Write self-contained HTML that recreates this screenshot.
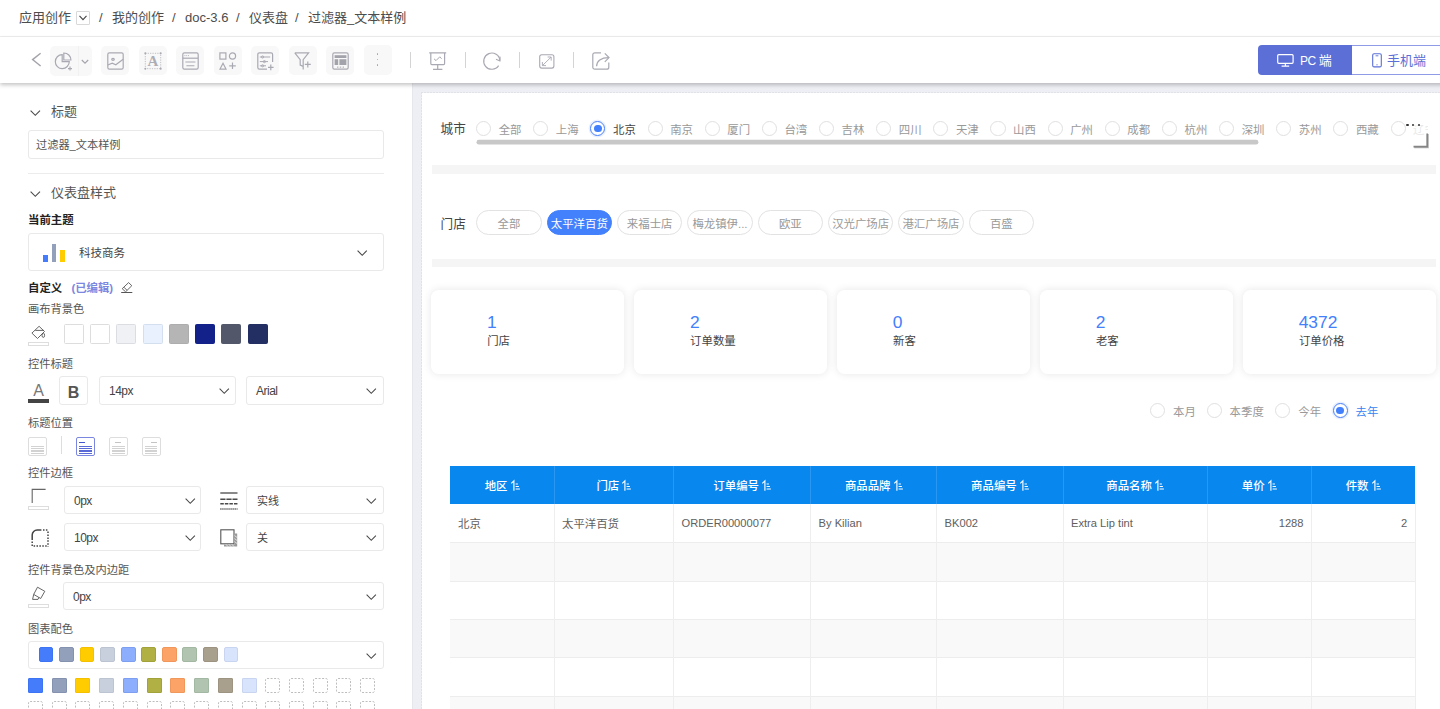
<!DOCTYPE html>
<html lang="zh-CN">
<head>
<meta charset="utf-8">
<title>过滤器_文本样例</title>
<style>
*{box-sizing:border-box;margin:0;padding:0}
html,body{width:1440px;height:709px;overflow:hidden;background:#fff}
body{font-family:"Liberation Sans","Noto Sans CJK SC",sans-serif;font-size:11px;color:#555;position:relative}
.abs{position:absolute}
svg{display:block;overflow:visible}
/* breadcrumb */
#crumb{position:absolute;left:0;top:0;width:1440px;height:37px;background:#fff;border-bottom:1px solid #efefef}
#crumb .t{position:absolute;top:8px;height:20px;line-height:20px;font-size:13px;color:#4c4c4c;white-space:nowrap}
/* toolbar */
#tool{position:absolute;left:0;top:37px;width:1440px;height:46px;background:#fff;z-index:5}
#toolsh{position:absolute;left:0;top:37px;width:1480px;height:46px;background:#fff;box-shadow:0 2px 4px rgba(0,0,0,.23);z-index:4}
.tb{position:absolute;top:9px;width:28px;height:29px;background:#f8f8f8;border-radius:5px}
.sep{position:absolute;top:15px;width:1px;height:16px;background:#d4d4d4}
/* left */
#left{position:absolute;left:0;top:83px;width:413px;height:626px;background:#fff;border-right:1px solid #e6e7ec}
#gap{position:absolute;left:412px;top:83px;width:1028px;height:626px;background:#eeeff5}
#canvas{position:absolute;left:421px;top:92px;width:1019px;height:617px;background:#fff;overflow:hidden}
.lab{position:absolute;left:28px;height:16px;line-height:16px;font-size:11.25px;color:#555;white-space:nowrap}
.sec{position:absolute;left:51px;height:18px;line-height:18px;font-size:13px;color:#555;white-space:nowrap}
.box{position:absolute;background:#fff;border:1px solid #e9e9e9;border-radius:3px}
.box .v{position:absolute;left:10px;top:0;height:100%;display:flex;align-items:center;font-size:11px;color:#444;white-space:nowrap}
.chev{position:absolute;width:10px;height:6px}
.sw{position:absolute;border-radius:1.5px}
/*CCSS-S*/
.flab{position:absolute;height:20px;line-height:20px;font-size:12.6px;color:#444;white-space:nowrap}
.rd{position:absolute;width:15.1px;height:15.1px;border:1px solid #e0e0e0;border-radius:50%;background:#fff}
.rd.on{border-color:#4a7ff7;box-shadow:0 0 0 1.5px rgba(64,128,255,.12)}
.rd.on:after{content:"";position:absolute;left:2.8px;top:2.8px;width:7.5px;height:7.5px;border-radius:50%;background:#4380fc}
.rt{position:absolute;height:18px;line-height:18px;font-size:11.4px;white-space:nowrap}
.pill{position:absolute;width:65.4px;height:24.8px;line-height:26.2px;border:1px solid #e2e2e2;border-radius:13px;text-align:center;font-size:11.4px;color:#999;white-space:nowrap;overflow:hidden;background:#fff}
.pill.on{background:#4380fc;border-color:#4380fc;color:#fff}
.card{position:absolute;width:192.8px;height:84.2px;border-radius:7.5px;background:#fff;box-shadow:0 0 8px rgba(0,0,0,.10)}
.card .num{position:absolute;left:55.6px;top:21.5px;height:20px;line-height:20px;font-size:17.4px;color:#4380fc;white-space:nowrap}
.card .cl{position:absolute;left:55.8px;top:42.3px;height:18px;line-height:18px;font-size:11.4px;color:#444;white-space:nowrap}
.th{position:absolute;height:38px;display:flex;align-items:center;justify-content:center;color:#fff;font-weight:500;font-size:11.4px;white-space:nowrap}
.th .si{margin-left:3.2px;position:relative;top:0.6px}
.td{position:absolute;height:38.4px;line-height:40.4px;padding:0 7.8px;font-size:11.4px;color:#606060;white-space:nowrap}
.td.lat{font-size:11.15px;line-height:38.4px}
/*CCSS-E*/
</style>
</head>
<body>
<div id="crumb">
  <span class="t" style="left:19px">应用创作</span>
  <span class="abs" style="left:76px;top:11px;width:14px;height:14px;border:1px solid #d9d9d9;border-radius:1px"></span>
  <svg class="abs" style="left:79px;top:15px" width="8" height="6" viewBox="0 0 8 6"><path d="M0.5 0.8 L4 4.6 L7.5 0.8" fill="none" stroke="#444" stroke-width="1.1"/></svg>
  <span class="t" style="left:99px">/</span>
  <span class="t" style="left:112px">我的创作</span>
  <span class="t" style="left:172px">/</span>
  <span class="t" style="left:185px">doc-3.6</span>
  <span class="t" style="left:236px">/</span>
  <span class="t" style="left:249px">仪表盘</span>
  <span class="t" style="left:295px">/</span>
  <span class="t" style="left:308px">过滤器_文本样例</span>
</div>
<div id="gap"></div>
<div id="left"><!--LEFT-S-->
<svg class="abs" style="left:29.6px;top:26.599999999999994px" width="10.6" height="6.2" viewBox="0 0 10.6 6.2"><path d="M0.6 0.7 L5.3 5.3 L10.0 0.7" fill="none" stroke="#4a4a4a" stroke-width="1.15"/></svg>
<span class="sec" style="top:20px">标题</span>
<div class="box" style="left:28px;top:47px;width:356px;height:29px"><span class="v" style="left:7px;color:#555;font-size:11.2px;padding-bottom:1px">过滤器_文本样例</span></div>
<div class="abs" style="left:28px;top:90px;width:356px;height:1px;background:#ececec"></div>
<svg class="abs" style="left:29.6px;top:107.6px" width="10.6" height="6.2" viewBox="0 0 10.6 6.2"><path d="M0.6 0.7 L5.3 5.3 L10.0 0.7" fill="none" stroke="#4a4a4a" stroke-width="1.15"/></svg>
<span class="sec" style="top:101px">仪表盘样式</span>
<span class="lab" style="top:129px;font-weight:bold;color:#222;font-size:11.4px">当前主题</span>
<div class="box" style="left:28px;top:150px;width:356px;height:38px"><span class="abs" style="left:14.2px;top:20.6px;width:4.4px;height:7.6px;background:#447cfc"></span><span class="abs" style="left:22.8px;top:10.2px;width:4.2px;height:18px;background:#92a0bc"></span><span class="abs" style="left:31.2px;top:15.6px;width:4.6px;height:12.6px;background:#ffcc00"></span><span class="v" style="left:50px;font-size:11.5px">科技商务</span></div>
<svg class="abs" style="left:357px;top:167px" width="10.4" height="6.2" viewBox="0 0 10.4 6.2"><path d="M0.6 0.7 L5.2 5.3 L9.8 0.7" fill="none" stroke="#4a4a4a" stroke-width="1.15"/></svg>
<span class="lab" style="top:197px;font-weight:bold;color:#222;font-size:11.4px">自定义</span>
<span class="lab" style="top:197px;left:71.4px;font-weight:bold;color:#7e87e0;font-size:11.4px">(已编辑)</span>
<svg class="abs" style="left:121px;top:199px" width="12" height="12" viewBox="0 0 12 12" fill="none" stroke="#555" stroke-width="0.9" stroke-linejoin="round"><path d="M7.6 0.6 L10.8 3.7 L4.6 9.8 L1.2 6.7 Z"/><path d="M2.9 5.2 L5.9 8.2"/><path d="M0.2 10.5 H11.3" stroke-width="1"/></svg>
<span class="lab" style="top:218px;">画布背景色</span>
<svg class="abs" style="left:31px;top:242px" width="16" height="15" viewBox="0 0 16 15" fill="none" stroke="#555" stroke-width="0.9" stroke-linejoin="round"><path d="M8.1 1.3 L13.5 6.5 L6.5 13.5 L0.9 8.1 Z"/><path d="M4.3 5.4 H12.9"/><ellipse cx="12.3" cy="10.3" rx="1.3" ry="2.1"/></svg>
<div class="abs" style="left:28px;top:258.5px;width:21px;height:4.4px;border:1px solid #ddd;background:#fff"></div>
<div class="sw" style="left:63.8px;top:241px;width:20px;height:20px;background:#ffffff;border:1px solid #ddd"></div>
<div class="sw" style="left:90.1px;top:241px;width:20px;height:20px;background:#ffffff;border:1px solid #ddd"></div>
<div class="sw" style="left:116.3px;top:241px;width:20px;height:20px;background:#f0f1f5;border:1px solid #dcdde2"></div>
<div class="sw" style="left:142.6px;top:241px;width:20px;height:20px;background:#e8f1fd;border:1px solid #d3deef"></div>
<div class="sw" style="left:168.9px;top:241px;width:20px;height:20px;background:#b5b5b5;border:1px solid #adadad"></div>
<div class="sw" style="left:195.1px;top:241px;width:20px;height:20px;background:#12228a;border:1px solid #12228a"></div>
<div class="sw" style="left:221.4px;top:241px;width:20px;height:20px;background:#52586a;border:1px solid #52586a"></div>
<div class="sw" style="left:247.7px;top:241px;width:20px;height:20px;background:#232f63;border:1px solid #232f63"></div>
<span class="lab" style="top:273px;">控件标题</span>
<span class="abs" style="left:28px;top:297.6px;width:21px;height:20px;line-height:20px;text-align:center;font-size:16px;color:#777">A</span>
<div class="abs" style="left:28px;top:316px;width:21px;height:4px;background:#444"></div>
<div class="box" style="left:59px;top:293px;width:29px;height:28.6px"><span class="abs" style="left:0;top:0;width:27px;height:27px;line-height:31px;text-align:center;font-size:16px;font-weight:bold;color:#555">B</span></div>
<div class="box" style="left:99px;top:293px;width:137px;height:28.6px"><span class="v" style="left:9px;font-size:12px;letter-spacing:-.5px;padding-top:1.6px">14px</span></div>
<svg class="abs" style="left:218.5px;top:305px" width="10.5" height="6.2" viewBox="0 0 10.5 6.2"><path d="M0.6 0.7 L5.25 5.3 L9.9 0.7" fill="none" stroke="#4a4a4a" stroke-width="1.1"/></svg>
<div class="box" style="left:246px;top:293px;width:138px;height:28.6px"><span class="v" style="left:9px;font-size:12px;letter-spacing:-.5px;padding-top:1.6px">Arial</span></div>
<svg class="abs" style="left:366px;top:305px" width="10.5" height="6.2" viewBox="0 0 10.5 6.2"><path d="M0.6 0.7 L5.25 5.3 L9.9 0.7" fill="none" stroke="#4a4a4a" stroke-width="1.1"/></svg>
<span class="lab" style="top:331.5px;">标题位置</span>
<div class="abs" style="left:28px;top:354px;width:19px;height:19px;border:1px solid #ddd;border-radius:2px;background:#fff"><span class="abs" style="left:2.4px;top:7.6px;width:12.4px;height:1.5px;background:#d2d2d2"></span><span class="abs" style="left:2.4px;top:9.899999999999999px;width:12.4px;height:1.5px;background:#d2d2d2"></span><span class="abs" style="left:2.4px;top:12.2px;width:12.4px;height:1.5px;background:#d2d2d2"></span><span class="abs" style="left:2.4px;top:14.5px;width:12.4px;height:1.5px;background:#d2d2d2"></span></div>
<div class="abs" style="left:61px;top:353px;width:1px;height:18px;background:#ddd"></div>
<div class="abs" style="left:76px;top:354px;width:19px;height:19px;border:1px solid #7b86e0;border-radius:2px;background:#fff"><span class="abs" style="left:2.4px;top:7.6px;width:12.4px;height:1.5px;background:#5a6bd8"></span><span class="abs" style="left:2.4px;top:9.899999999999999px;width:12.4px;height:1.5px;background:#5a6bd8"></span><span class="abs" style="left:2.4px;top:12.2px;width:12.4px;height:1.5px;background:#5a6bd8"></span><span class="abs" style="left:2.4px;top:14.5px;width:12.4px;height:1.5px;background:#5a6bd8"></span><span class="abs" style="left:2.4px;top:3.6px;width:6px;height:1.9px;background:#4456d0"></span></div>
<div class="abs" style="left:108.8px;top:354px;width:19px;height:19px;border:1px solid #ddd;border-radius:2px;background:#fff"><span class="abs" style="left:2.4px;top:7.6px;width:12.4px;height:1.5px;background:#d2d2d2"></span><span class="abs" style="left:2.4px;top:9.899999999999999px;width:12.4px;height:1.5px;background:#d2d2d2"></span><span class="abs" style="left:2.4px;top:12.2px;width:12.4px;height:1.5px;background:#d2d2d2"></span><span class="abs" style="left:2.4px;top:14.5px;width:12.4px;height:1.5px;background:#d2d2d2"></span><span class="abs" style="left:5.6px;top:3.6px;width:6px;height:1.9px;background:#c4c4c4"></span></div>
<div class="abs" style="left:141.6px;top:354px;width:19px;height:19px;border:1px solid #ddd;border-radius:2px;background:#fff"><span class="abs" style="left:2.4px;top:7.6px;width:12.4px;height:1.5px;background:#d2d2d2"></span><span class="abs" style="left:2.4px;top:9.899999999999999px;width:12.4px;height:1.5px;background:#d2d2d2"></span><span class="abs" style="left:2.4px;top:12.2px;width:12.4px;height:1.5px;background:#d2d2d2"></span><span class="abs" style="left:2.4px;top:14.5px;width:12.4px;height:1.5px;background:#d2d2d2"></span><span class="abs" style="left:8.8px;top:3.6px;width:6px;height:1.9px;background:#c4c4c4"></span></div>
<span class="lab" style="top:382px;">控件边框</span>
<svg class="abs" style="left:31px;top:405px" width="16" height="16" viewBox="0 0 16 16" fill="none" stroke="#666" stroke-width="1.1"><path d="M1.2 15 V1.4 H14.6"/></svg>
<div class="abs" style="left:28px;top:423px;width:21px;height:4px;border:1px solid #ddd;background:#fff"></div>
<div class="box" style="left:64px;top:403px;width:137px;height:28px"><span class="v" style="left:9px;font-size:12px;letter-spacing:-.5px;padding-top:1.6px">0px</span></div>
<svg class="abs" style="left:184.5px;top:414.5px" width="10.5" height="6.2" viewBox="0 0 10.5 6.2"><path d="M0.6 0.7 L5.25 5.3 L9.9 0.7" fill="none" stroke="#4a4a4a" stroke-width="1.1"/></svg>
<svg class="abs" style="left:220px;top:409px" width="18" height="18" viewBox="0 0 18 18" fill="none" stroke="#4a4a4a"><path d="M0.3 1 H17.5" stroke-width="1.3"/><path d="M0.3 7.2 H17.5" stroke-width="1.4" stroke-dasharray="5.2 0.9"/><path d="M0.3 11.8 H17.5" stroke-width="1.4" stroke-dasharray="3.5 1.05"/><path d="M0.3 17 H17.5" stroke-width="1.4" stroke-dasharray="1.2 0.84"/></svg>
<div class="box" style="left:246px;top:403px;width:138px;height:28px"><span class="v">实线</span></div>
<svg class="abs" style="left:366px;top:414.5px" width="10.5" height="6.2" viewBox="0 0 10.5 6.2"><path d="M0.6 0.7 L5.25 5.3 L9.9 0.7" fill="none" stroke="#4a4a4a" stroke-width="1.1"/></svg>
<svg class="abs" style="left:31px;top:446px" width="18" height="18" viewBox="0 0 18 18" fill="none" stroke="#444"><path d="M1.2 11 V6 A5 5 0 0 1 6.2 1 H10.4" stroke-width="1.5"/><path d="M12 1 H17.6 M17 2.6 V17.4 M1.2 12.6 V17.4 M2.6 17 H16" stroke-width="1.5" stroke-dasharray="1.5 1.4"/></svg>
<div class="box" style="left:64px;top:440.4px;width:137px;height:28px"><span class="v" style="left:9px;font-size:12px;letter-spacing:-.5px;padding-top:1.6px">10px</span></div>
<svg class="abs" style="left:184.5px;top:452px" width="10.5" height="6.2" viewBox="0 0 10.5 6.2"><path d="M0.6 0.7 L5.25 5.3 L9.9 0.7" fill="none" stroke="#4a4a4a" stroke-width="1.1"/></svg>
<svg class="abs" style="left:220px;top:446px" width="18" height="18" viewBox="0 0 18 18"><rect x="0.8" y="0.8" width="13.2" height="14" fill="#fff" stroke="#555" stroke-width="1.1"/><path d="M14.6 4.6 H17.2 V17.6 H4 V15.4 H14.6 Z" fill="#999"/><path d="M14.6 6.6 L17.2 8.6 M14.6 9.6 L17.2 11.6 M14.6 12.6 L17.2 14.6 M6 15.4 L8 17.6 M9 15.4 L11 17.6 M12 15.4 L14 17.6" stroke="#fff" stroke-width="0.7"/></svg>
<div class="box" style="left:246px;top:440.4px;width:138px;height:28px"><span class="v">关</span></div>
<svg class="abs" style="left:366px;top:452px" width="10.5" height="6.2" viewBox="0 0 10.5 6.2"><path d="M0.6 0.7 L5.25 5.3 L9.9 0.7" fill="none" stroke="#4a4a4a" stroke-width="1.1"/></svg>
<span class="lab" style="top:478.5px;">控件背景色及内边距</span>
<svg class="abs" style="left:32px;top:504px" width="14" height="14" viewBox="0 0 14 14" fill="none" stroke="#555" stroke-width="0.9" stroke-linejoin="round"><path d="M5.5 0.2 L12.8 4.3 L8.7 11.5 L1.7 7.4 Z"/><path d="M1.7 7.4 L0.6 12.4 L6 12.4 L6.9 10.4"/></svg>
<div class="abs" style="left:28px;top:520.5px;width:21px;height:4px;border:1px solid #ddd;background:#fff"></div>
<div class="box" style="left:63px;top:499.4px;width:321px;height:27.4px"><span class="v" style="left:9px;font-size:12px;letter-spacing:-.5px;padding-top:1.6px">0px</span></div>
<svg class="abs" style="left:366px;top:510.5px" width="10.5" height="6.2" viewBox="0 0 10.5 6.2"><path d="M0.6 0.7 L5.25 5.3 L9.9 0.7" fill="none" stroke="#4a4a4a" stroke-width="1.1"/></svg>
<span class="lab" style="top:537.5px;">图表配色</span>
<div class="box" style="left:28px;top:558px;width:356px;height:27.6px"><span class="sw" style="left:9.6px;top:4.9px;width:14.8px;height:15.2px;border-radius:2px;background:#447cfc;border:1px solid #3c74f4"></span><span class="sw" style="left:30.1px;top:4.9px;width:14.8px;height:15.2px;border-radius:2px;background:#92a0bc;border:1px solid #8492b0"></span><span class="sw" style="left:50.7px;top:4.9px;width:14.8px;height:15.2px;border-radius:2px;background:#ffcc00;border:1px solid #f4c000"></span><span class="sw" style="left:71.2px;top:4.9px;width:14.8px;height:15.2px;border-radius:2px;background:#c8d0de;border:1px solid #bcc4d2"></span><span class="sw" style="left:91.8px;top:4.9px;width:14.8px;height:15.2px;border-radius:2px;background:#8caefc;border:1px solid #7e9ff0"></span><span class="sw" style="left:112.3px;top:4.9px;width:14.8px;height:15.2px;border-radius:2px;background:#b0b044;border:1px solid #a2a23a"></span><span class="sw" style="left:132.9px;top:4.9px;width:14.8px;height:15.2px;border-radius:2px;background:#fca468;border:1px solid #f0985c"></span><span class="sw" style="left:153.4px;top:4.9px;width:14.8px;height:15.2px;border-radius:2px;background:#b0c4b0;border:1px solid #a2b8a2"></span><span class="sw" style="left:174.0px;top:4.9px;width:14.8px;height:15.2px;border-radius:2px;background:#a8a08c;border:1px solid #9c9480"></span><span class="sw" style="left:194.6px;top:4.9px;width:14.8px;height:15.2px;border-radius:2px;background:#d8e4fc;border:1px solid #c8d4f0"></span></div>
<svg class="abs" style="left:366px;top:569.5px" width="10.5" height="6.2" viewBox="0 0 10.5 6.2"><path d="M0.6 0.7 L5.25 5.3 L9.9 0.7" fill="none" stroke="#4a4a4a" stroke-width="1.1"/></svg>
<span class="sw" style="left:28.0px;top:595.3px;width:15px;height:14.8px;border-radius:1px;background:#447cfc;border:1px solid #3c74f4"></span>
<span class="sw" style="left:51.7px;top:595.3px;width:15px;height:14.8px;border-radius:1px;background:#92a0bc;border:1px solid #8492b0"></span>
<span class="sw" style="left:75.4px;top:595.3px;width:15px;height:14.8px;border-radius:1px;background:#ffcc00;border:1px solid #f4c000"></span>
<span class="sw" style="left:99.2px;top:595.3px;width:15px;height:14.8px;border-radius:1px;background:#c8d0de;border:1px solid #bcc4d2"></span>
<span class="sw" style="left:122.9px;top:595.3px;width:15px;height:14.8px;border-radius:1px;background:#8caefc;border:1px solid #7e9ff0"></span>
<span class="sw" style="left:146.6px;top:595.3px;width:15px;height:14.8px;border-radius:1px;background:#b0b044;border:1px solid #a2a23a"></span>
<span class="sw" style="left:170.3px;top:595.3px;width:15px;height:14.8px;border-radius:1px;background:#fca468;border:1px solid #f0985c"></span>
<span class="sw" style="left:194.0px;top:595.3px;width:15px;height:14.8px;border-radius:1px;background:#b0c4b0;border:1px solid #a2b8a2"></span>
<span class="sw" style="left:217.8px;top:595.3px;width:15px;height:14.8px;border-radius:1px;background:#a8a08c;border:1px solid #9c9480"></span>
<span class="sw" style="left:241.5px;top:595.3px;width:15px;height:14.8px;border-radius:1px;background:#d8e4fc;border:1px solid #c8d4f0"></span>
<svg class="abs" style="left:265.2px;top:595.3px" width="15" height="15" viewBox="0 0 15 15"><rect x="0.5" y="0.5" width="14" height="14" rx="1.6" fill="#fff" stroke="#bdbdbd" stroke-width="1" stroke-dasharray="2 1.5"/></svg>
<svg class="abs" style="left:288.9px;top:595.3px" width="15" height="15" viewBox="0 0 15 15"><rect x="0.5" y="0.5" width="14" height="14" rx="1.6" fill="#fff" stroke="#bdbdbd" stroke-width="1" stroke-dasharray="2 1.5"/></svg>
<svg class="abs" style="left:312.6px;top:595.3px" width="15" height="15" viewBox="0 0 15 15"><rect x="0.5" y="0.5" width="14" height="14" rx="1.6" fill="#fff" stroke="#bdbdbd" stroke-width="1" stroke-dasharray="2 1.5"/></svg>
<svg class="abs" style="left:336.4px;top:595.3px" width="15" height="15" viewBox="0 0 15 15"><rect x="0.5" y="0.5" width="14" height="14" rx="1.6" fill="#fff" stroke="#bdbdbd" stroke-width="1" stroke-dasharray="2 1.5"/></svg>
<svg class="abs" style="left:360.1px;top:595.3px" width="15" height="15" viewBox="0 0 15 15"><rect x="0.5" y="0.5" width="14" height="14" rx="1.6" fill="#fff" stroke="#bdbdbd" stroke-width="1" stroke-dasharray="2 1.5"/></svg>
<svg class="abs" style="left:28.0px;top:618.2px" width="15" height="15" viewBox="0 0 15 15"><rect x="0.5" y="0.5" width="14" height="14" rx="1.6" fill="#fff" stroke="#bdbdbd" stroke-width="1" stroke-dasharray="2 1.5"/></svg>
<svg class="abs" style="left:51.7px;top:618.2px" width="15" height="15" viewBox="0 0 15 15"><rect x="0.5" y="0.5" width="14" height="14" rx="1.6" fill="#fff" stroke="#bdbdbd" stroke-width="1" stroke-dasharray="2 1.5"/></svg>
<svg class="abs" style="left:75.4px;top:618.2px" width="15" height="15" viewBox="0 0 15 15"><rect x="0.5" y="0.5" width="14" height="14" rx="1.6" fill="#fff" stroke="#bdbdbd" stroke-width="1" stroke-dasharray="2 1.5"/></svg>
<svg class="abs" style="left:99.2px;top:618.2px" width="15" height="15" viewBox="0 0 15 15"><rect x="0.5" y="0.5" width="14" height="14" rx="1.6" fill="#fff" stroke="#bdbdbd" stroke-width="1" stroke-dasharray="2 1.5"/></svg>
<svg class="abs" style="left:122.9px;top:618.2px" width="15" height="15" viewBox="0 0 15 15"><rect x="0.5" y="0.5" width="14" height="14" rx="1.6" fill="#fff" stroke="#bdbdbd" stroke-width="1" stroke-dasharray="2 1.5"/></svg>
<svg class="abs" style="left:146.6px;top:618.2px" width="15" height="15" viewBox="0 0 15 15"><rect x="0.5" y="0.5" width="14" height="14" rx="1.6" fill="#fff" stroke="#bdbdbd" stroke-width="1" stroke-dasharray="2 1.5"/></svg>
<svg class="abs" style="left:170.3px;top:618.2px" width="15" height="15" viewBox="0 0 15 15"><rect x="0.5" y="0.5" width="14" height="14" rx="1.6" fill="#fff" stroke="#bdbdbd" stroke-width="1" stroke-dasharray="2 1.5"/></svg>
<svg class="abs" style="left:194.0px;top:618.2px" width="15" height="15" viewBox="0 0 15 15"><rect x="0.5" y="0.5" width="14" height="14" rx="1.6" fill="#fff" stroke="#bdbdbd" stroke-width="1" stroke-dasharray="2 1.5"/></svg>
<svg class="abs" style="left:217.8px;top:618.2px" width="15" height="15" viewBox="0 0 15 15"><rect x="0.5" y="0.5" width="14" height="14" rx="1.6" fill="#fff" stroke="#bdbdbd" stroke-width="1" stroke-dasharray="2 1.5"/></svg>
<svg class="abs" style="left:241.5px;top:618.2px" width="15" height="15" viewBox="0 0 15 15"><rect x="0.5" y="0.5" width="14" height="14" rx="1.6" fill="#fff" stroke="#bdbdbd" stroke-width="1" stroke-dasharray="2 1.5"/></svg>
<svg class="abs" style="left:265.2px;top:618.2px" width="15" height="15" viewBox="0 0 15 15"><rect x="0.5" y="0.5" width="14" height="14" rx="1.6" fill="#fff" stroke="#bdbdbd" stroke-width="1" stroke-dasharray="2 1.5"/></svg>
<svg class="abs" style="left:288.9px;top:618.2px" width="15" height="15" viewBox="0 0 15 15"><rect x="0.5" y="0.5" width="14" height="14" rx="1.6" fill="#fff" stroke="#bdbdbd" stroke-width="1" stroke-dasharray="2 1.5"/></svg>
<svg class="abs" style="left:312.6px;top:618.2px" width="15" height="15" viewBox="0 0 15 15"><rect x="0.5" y="0.5" width="14" height="14" rx="1.6" fill="#fff" stroke="#bdbdbd" stroke-width="1" stroke-dasharray="2 1.5"/></svg>
<svg class="abs" style="left:336.4px;top:618.2px" width="15" height="15" viewBox="0 0 15 15"><rect x="0.5" y="0.5" width="14" height="14" rx="1.6" fill="#fff" stroke="#bdbdbd" stroke-width="1" stroke-dasharray="2 1.5"/></svg>
<svg class="abs" style="left:360.1px;top:618.2px" width="15" height="15" viewBox="0 0 15 15"><rect x="0.5" y="0.5" width="14" height="14" rx="1.6" fill="#fff" stroke="#bdbdbd" stroke-width="1" stroke-dasharray="2 1.5"/></svg>
<!--LEFT-E--></div>
<div id="canvas"><!--CANVAS-S-->
<div class="abs" style="left:0;top:0;width:1019px;height:1px;background:repeating-linear-gradient(90deg,#e1e2e8 0,#e1e2e8 2px,#eeeff5 2px,#eeeff5 3px)"></div>
<div class="abs" style="left:0;top:0;width:1px;height:617px;background:repeating-linear-gradient(180deg,#e1e2e8 0,#e1e2e8 2px,#eeeff5 2px,#eeeff5 3px)"></div>
<span class="flab" style="left:19.60px;top:27.20px">城市</span>
<div class="abs" style="left:49.00px;top:20.00px;width:957.6px;height:34px;overflow:hidden">
<span class="rd" style="left:6.10px;top:9.00px"></span><span class="rt" style="left:28.70px;top:8.60px;color:#999;">全部</span>
<span class="rd" style="left:63.25px;top:9.00px"></span><span class="rt" style="left:85.85px;top:8.60px;color:#999;">上海</span>
<span class="rd on" style="left:120.40px;top:9.00px"></span><span class="rt" style="left:143.00px;top:8.60px;color:#444;">北京</span>
<span class="rd" style="left:177.55px;top:9.00px"></span><span class="rt" style="left:200.15px;top:8.60px;color:#999;">南京</span>
<span class="rd" style="left:234.70px;top:9.00px"></span><span class="rt" style="left:257.30px;top:8.60px;color:#999;">厦门</span>
<span class="rd" style="left:291.85px;top:9.00px"></span><span class="rt" style="left:314.45px;top:8.60px;color:#999;">台湾</span>
<span class="rd" style="left:349.00px;top:9.00px"></span><span class="rt" style="left:371.60px;top:8.60px;color:#999;">吉林</span>
<span class="rd" style="left:406.15px;top:9.00px"></span><span class="rt" style="left:428.75px;top:8.60px;color:#999;">四川</span>
<span class="rd" style="left:463.30px;top:9.00px"></span><span class="rt" style="left:485.90px;top:8.60px;color:#999;">天津</span>
<span class="rd" style="left:520.45px;top:9.00px"></span><span class="rt" style="left:543.05px;top:8.60px;color:#999;">山西</span>
<span class="rd" style="left:577.60px;top:9.00px"></span><span class="rt" style="left:600.20px;top:8.60px;color:#999;">广州</span>
<span class="rd" style="left:634.75px;top:9.00px"></span><span class="rt" style="left:657.35px;top:8.60px;color:#999;">成都</span>
<span class="rd" style="left:691.90px;top:9.00px"></span><span class="rt" style="left:714.50px;top:8.60px;color:#999;">杭州</span>
<span class="rd" style="left:749.05px;top:9.00px"></span><span class="rt" style="left:771.65px;top:8.60px;color:#999;">深圳</span>
<span class="rd" style="left:806.20px;top:9.00px"></span><span class="rt" style="left:828.80px;top:8.60px;color:#999;">苏州</span>
<span class="rd" style="left:863.35px;top:9.00px"></span><span class="rt" style="left:885.95px;top:8.60px;color:#999;">西藏</span>
<span class="rd" style="left:920.50px;top:9.00px"></span><span class="rt" style="left:943.10px;top:8.60px;color:#999;opacity:.22;">辽宁</span>
</div>
<svg class="abs" style="left:55.00px;top:47.00px" width="784" height="7" viewBox="0 0 784 7"><rect x="0.5" y="0.85" width="781.9" height="4.6" rx="2.3" fill="#c8c8c8"/></svg>
<span class="abs" style="left:985.20px;top:31.90px;width:2.4px;height:2.4px;border-radius:50%;background:#333"></span>
<span class="abs" style="left:991.10px;top:31.90px;width:2.4px;height:2.4px;border-radius:50%;background:#333"></span>
<span class="abs" style="left:997.00px;top:31.90px;width:2.4px;height:2.4px;border-radius:50%;background:#333"></span>
<svg class="abs" style="left:992.00px;top:40.60px" width="16" height="16" viewBox="0 0 16 16"><path d="M14.2 0.4 V13.7 H0.5" fill="none" stroke="#b8b8b8" stroke-width="1.8" transform="translate(0.7,0.7)"/><path d="M14.2 0.4 V13.7 H0.5" fill="none" stroke="#858585" stroke-width="1.7"/></svg>
<div class="abs" style="left:10.60px;top:73.20px;width:1004.2px;height:8.6px;background:#f5f5f5"></div>
<div class="abs" style="left:10.60px;top:166.70px;width:1004.2px;height:8.7px;background:#f5f5f5"></div>
<span class="flab" style="left:19.60px;top:122.00px">门店</span>
<span class="pill" style="left:55.30px;top:117.80px">全部</span>
<span class="pill on" style="left:125.63px;top:117.80px">太平洋百货</span>
<span class="pill" style="left:195.96px;top:117.80px">来福士店</span>
<span class="pill" style="left:266.29px;top:117.80px">梅龙镇伊...</span>
<span class="pill" style="left:336.62px;top:117.80px">欧亚</span>
<span class="pill" style="left:406.95px;top:117.80px">汉光广场店</span>
<span class="pill" style="left:477.28px;top:117.80px">港汇广场店</span>
<span class="pill" style="left:547.61px;top:117.80px">百盛</span>
<div class="card" style="left:10.40px;top:198.20px"><span class="num">1</span><span class="cl">门店</span></div>
<div class="card" style="left:213.32px;top:198.20px"><span class="num">2</span><span class="cl">订单数量</span></div>
<div class="card" style="left:416.24px;top:198.20px"><span class="num">0</span><span class="cl">新客</span></div>
<div class="card" style="left:619.16px;top:198.20px"><span class="num">2</span><span class="cl">老客</span></div>
<div class="card" style="left:822.08px;top:198.20px"><span class="num">4372</span><span class="cl">订单价格</span></div>
<span class="rd" style="left:729.10px;top:311.20px"></span><span class="rt" style="left:752.00px;top:310.60px;color:#999">本月</span>
<span class="rd" style="left:785.70px;top:311.20px"></span><span class="rt" style="left:808.60px;top:310.60px;color:#999">本季度</span>
<span class="rd" style="left:854.40px;top:311.20px"></span><span class="rt" style="left:877.30px;top:310.60px;color:#999">今年</span>
<span class="rd on" style="left:911.70px;top:311.20px"></span><span class="rt" style="left:934.60px;top:310.60px;color:#3a84f0">去年</span>
<div class="abs" style="left:29.20px;top:373.80px;width:964.8px;height:38px;background:#0887ee"></div>
<div class="th" style="left:29.20px;top:373.80px;width:104.0px"><span>地区</span><svg class="si" width="9" height="11" viewBox="0 0 9 11" fill="none" stroke="#fff" stroke-width="1.15"><path d="M0.3 3.4 L2.9 0.8 V10.8"/><path d="M4.6 4 H6.9 M4.6 6.5 H7.9 M4.6 9 H8.9" stroke-width="1"/></svg></div>
<div class="th" style="left:133.20px;top:373.80px;width:119.5px"><span>门店</span><svg class="si" width="9" height="11" viewBox="0 0 9 11" fill="none" stroke="#fff" stroke-width="1.15"><path d="M0.3 3.4 L2.9 0.8 V10.8"/><path d="M4.6 4 H6.9 M4.6 6.5 H7.9 M4.6 9 H8.9" stroke-width="1"/></svg></div>
<div class="abs" style="left:132.70px;top:373.80px;width:1px;height:38px;background:#2b97f1"></div>
<div class="th" style="left:252.70px;top:373.80px;width:137.1px"><span>订单编号</span><svg class="si" width="9" height="11" viewBox="0 0 9 11" fill="none" stroke="#fff" stroke-width="1.15"><path d="M0.3 3.4 L2.9 0.8 V10.8"/><path d="M4.6 4 H6.9 M4.6 6.5 H7.9 M4.6 9 H8.9" stroke-width="1"/></svg></div>
<div class="abs" style="left:252.20px;top:373.80px;width:1px;height:38px;background:#2b97f1"></div>
<div class="th" style="left:389.80px;top:373.80px;width:126.0px"><span>商品品牌</span><svg class="si" width="9" height="11" viewBox="0 0 9 11" fill="none" stroke="#fff" stroke-width="1.15"><path d="M0.3 3.4 L2.9 0.8 V10.8"/><path d="M4.6 4 H6.9 M4.6 6.5 H7.9 M4.6 9 H8.9" stroke-width="1"/></svg></div>
<div class="abs" style="left:389.30px;top:373.80px;width:1px;height:38px;background:#2b97f1"></div>
<div class="th" style="left:515.80px;top:373.80px;width:126.4px"><span>商品编号</span><svg class="si" width="9" height="11" viewBox="0 0 9 11" fill="none" stroke="#fff" stroke-width="1.15"><path d="M0.3 3.4 L2.9 0.8 V10.8"/><path d="M4.6 4 H6.9 M4.6 6.5 H7.9 M4.6 9 H8.9" stroke-width="1"/></svg></div>
<div class="abs" style="left:515.30px;top:373.80px;width:1px;height:38px;background:#2b97f1"></div>
<div class="th" style="left:642.20px;top:373.80px;width:144.0px"><span>商品名称</span><svg class="si" width="9" height="11" viewBox="0 0 9 11" fill="none" stroke="#fff" stroke-width="1.15"><path d="M0.3 3.4 L2.9 0.8 V10.8"/><path d="M4.6 4 H6.9 M4.6 6.5 H7.9 M4.6 9 H8.9" stroke-width="1"/></svg></div>
<div class="abs" style="left:641.70px;top:373.80px;width:1px;height:38px;background:#2b97f1"></div>
<div class="th" style="left:786.20px;top:373.80px;width:104.1px"><span>单价</span><svg class="si" width="9" height="11" viewBox="0 0 9 11" fill="none" stroke="#fff" stroke-width="1.15"><path d="M0.3 3.4 L2.9 0.8 V10.8"/><path d="M4.6 4 H6.9 M4.6 6.5 H7.9 M4.6 9 H8.9" stroke-width="1"/></svg></div>
<div class="abs" style="left:785.70px;top:373.80px;width:1px;height:38px;background:#2b97f1"></div>
<div class="th" style="left:890.30px;top:373.80px;width:103.7px"><span>件数</span><svg class="si" width="9" height="11" viewBox="0 0 9 11" fill="none" stroke="#fff" stroke-width="1.15"><path d="M0.3 3.4 L2.9 0.8 V10.8"/><path d="M4.6 4 H6.9 M4.6 6.5 H7.9 M4.6 9 H8.9" stroke-width="1"/></svg></div>
<div class="abs" style="left:889.80px;top:373.80px;width:1px;height:38px;background:#2b97f1"></div>
<div class="abs" style="left:29.20px;top:411.80px;width:964.8px;height:38.4px;background:#fff"></div>
<div class="abs" style="left:29.20px;top:450.20px;width:964.8px;height:38.4px;background:#f9f9f9"></div>
<div class="abs" style="left:29.20px;top:488.60px;width:964.8px;height:38.4px;background:#fff"></div>
<div class="abs" style="left:29.20px;top:527.00px;width:964.8px;height:38.4px;background:#f9f9f9"></div>
<div class="abs" style="left:29.20px;top:565.40px;width:964.8px;height:38.4px;background:#fff"></div>
<div class="abs" style="left:29.20px;top:603.80px;width:964.8px;height:38.4px;background:#f9f9f9"></div>
<div class="abs" style="left:29.20px;top:450.20px;width:964.8px;height:1px;background:#ededed"></div>
<div class="abs" style="left:29.20px;top:488.60px;width:964.8px;height:1px;background:#ededed"></div>
<div class="abs" style="left:29.20px;top:527.00px;width:964.8px;height:1px;background:#ededed"></div>
<div class="abs" style="left:29.20px;top:565.40px;width:964.8px;height:1px;background:#ededed"></div>
<div class="abs" style="left:29.20px;top:603.80px;width:964.8px;height:1px;background:#ededed"></div>
<div class="abs" style="left:29.20px;top:642.20px;width:964.8px;height:1px;background:#ededed"></div>
<div class="abs" style="left:132.70px;top:411.80px;width:1px;height:206px;background:#eeeeee"></div>
<div class="abs" style="left:252.20px;top:411.80px;width:1px;height:206px;background:#eeeeee"></div>
<div class="abs" style="left:389.30px;top:411.80px;width:1px;height:206px;background:#eeeeee"></div>
<div class="abs" style="left:515.30px;top:411.80px;width:1px;height:206px;background:#eeeeee"></div>
<div class="abs" style="left:641.70px;top:411.80px;width:1px;height:206px;background:#eeeeee"></div>
<div class="abs" style="left:785.70px;top:411.80px;width:1px;height:206px;background:#eeeeee"></div>
<div class="abs" style="left:889.80px;top:411.80px;width:1px;height:206px;background:#eeeeee"></div>
<div class="abs" style="left:993.50px;top:411.80px;width:1px;height:206px;background:#eeeeee"></div>
<div class="td" style="left:29.20px;top:411.80px;width:104.0px;text-align:left">北京</div>
<div class="td" style="left:133.20px;top:411.80px;width:119.5px;text-align:left">太平洋百货</div>
<div class="td lat" style="left:252.70px;top:411.80px;width:137.1px;text-align:left">ORDER00000077</div>
<div class="td lat" style="left:389.80px;top:411.80px;width:126.0px;text-align:left">By Kilian</div>
<div class="td lat" style="left:515.80px;top:411.80px;width:126.4px;text-align:left">BK002</div>
<div class="td lat" style="left:642.20px;top:411.80px;width:144.0px;text-align:left">Extra Lip tint</div>
<div class="td lat" style="left:786.20px;top:411.80px;width:104.1px;text-align:right">1288</div>
<div class="td lat" style="left:890.30px;top:411.80px;width:103.7px;text-align:right">2</div>
<!--CANVAS-E--></div>
<div id="toolsh"></div>
<div id="tool"><!--TOOL-S-->
<svg class="abs" style="left:31px;top:15px" width="11" height="16" viewBox="0 0 11 16"><path d="M9.6 1.2 L1.6 7.6 L9.6 14" fill="none" stroke="#a3a3ab" stroke-width="1.4"/></svg>
<div class="tb" style="left:50px;width:42px;height:30px;top:8.6px"></div>
<div class="abs" style="left:78px;top:8.6px;width:1px;height:30px;background:#f1f1f1"></div>
<svg class="abs" style="left:54px;top:15px" width="20" height="20" viewBox="0 0 20 20" fill="none" stroke="#a9a9b3" stroke-width="1.2"><path d="M8.2 2.6 A7 7 0 1 0 15.3 9.6 L8.2 9.6 Z"/><path d="M9.8 1 A7 7 0 0 1 16.9 8 L9.8 8 Z"/><path d="M14 16.6 H18 M16 14.6 V18.6" stroke-width="1.1"/></svg>
<svg class="abs" style="left:81px;top:22px" width="8" height="6" viewBox="0 0 8 6"><path d="M0.8 1 L4 4.2 L7.2 1" fill="none" stroke="#a3a3ab" stroke-width="1.1"/></svg>

<div class="tb" style="left:101px"></div>
<svg class="abs" style="left:107px;top:15px" width="17" height="18" viewBox="0 0 17 18" fill="none" stroke="#a9a9b3" stroke-width="1.2"><rect x="0.8" y="0.8" width="15.4" height="16.4" rx="1.6"/><ellipse cx="6" cy="7.3" rx="1.3" ry="1"/><path d="M0.8 13 L5.2 11.2 L8.8 12.8 L16.2 7.2"/></svg>

<div class="tb" style="left:139px"></div>
<svg class="abs" style="left:144px;top:15px" width="18" height="18" viewBox="0 0 18 18"><rect x="1.3" y="1.3" width="15.4" height="15.4" fill="none" stroke="#b0b0b8" stroke-width="0.8" stroke-dasharray="1.2 1.2"/><g fill="#a8a8b0"><circle cx="1.3" cy="1.3" r="1"/><circle cx="16.7" cy="1.3" r="1"/><circle cx="1.3" cy="16.7" r="1"/><circle cx="16.7" cy="16.7" r="1"/></g><text x="9" y="14.2" text-anchor="middle" font-family="Liberation Serif,serif" font-weight="bold" font-size="15" fill="#adadb5">A</text></svg>

<div class="tb" style="left:176px"></div>
<svg class="abs" style="left:182px;top:15px" width="17" height="18" viewBox="0 0 17 18" fill="none" stroke="#a9a9b3" stroke-width="1.2"><rect x="0.8" y="0.8" width="15.4" height="16.4" rx="1.6"/><path d="M0.8 6.2 H16.2"/><path d="M3.4 10 H13.4 M4.4 13.8 H12.4" stroke-width="1.1"/><path d="M2.4 3.6 H3.4 M4.2 3.6 H5.2 M6 3.6 H7" stroke-width="0.8"/></svg>

<div class="tb" style="left:214px"></div>
<svg class="abs" style="left:219px;top:15px" width="18" height="18" viewBox="0 0 18 18" fill="none" stroke="#a9a9b3" stroke-width="1.2"><rect x="0.9" y="0.9" width="6" height="6.2"/><circle cx="13.5" cy="4" r="3.1"/><path d="M4 11.2 L7 17.1 H1 Z"/><path d="M10.2 13.8 H16.8 M13.5 10.5 V17.1"/></svg>

<div class="tb" style="left:251px"></div>
<svg class="abs" style="left:257px;top:15px" width="18" height="18" viewBox="0 0 18 18" fill="none" stroke="#a9a9b3" stroke-width="1.2"><path d="M15.6 10 V2.4 A1.6 1.6 0 0 0 14 0.8 H2.4 A1.6 1.6 0 0 0 0.8 2.4 V15.6 A1.6 1.6 0 0 0 2.4 17.2 H10"/><path d="M2.8 5 H13.2 M2.8 9.6 H11 M2.8 13.8 H9" stroke-width="1"/><circle cx="5.6" cy="5" r="1.1" stroke-width="0.9"/><circle cx="7.4" cy="9.6" r="1.1" stroke-width="0.9"/><circle cx="5.6" cy="13.8" r="1.1" stroke-width="0.9"/><path d="M11 15.4 H16.6 M13.8 12.6 V18.2"/></svg>

<div class="tb" style="left:289px"></div>
<svg class="abs" style="left:294px;top:15px" width="18" height="18" viewBox="0 0 18 18" fill="none" stroke="#a9a9b3" stroke-width="1.2"><path d="M0.8 0.8 H14.6 L9.2 7.6 V17.4 M0.8 0.8 L6.2 7.6 V13 L9.2 14.4"/><path d="M10.8 12.4 H16.8 M13.8 9.4 V15.4"/></svg>

<div class="tb" style="left:326px"></div>
<svg class="abs" style="left:332px;top:15px" width="17" height="18" viewBox="0 0 17 18"><rect x="0.8" y="0.8" width="15.4" height="16.4" rx="1.6" fill="none" stroke="#a9a9b3" stroke-width="1.2"/><g fill="#a3a3ab"><rect x="2.6" y="3.2" width="11.8" height="2.8"/><rect x="2.6" y="7.2" width="3.6" height="5.8"/><rect x="7.4" y="7.2" width="7" height="5.8"/><rect x="5" y="14.4" width="1.4" height="1.6" opacity=".6"/><rect x="7.8" y="14.4" width="1.4" height="1.6" opacity=".6"/><rect x="10.6" y="14.4" width="1.4" height="1.6" opacity=".6"/></g></svg>

<div class="tb" style="left:364px;top:8.4px;height:30px"></div>
<div class="abs" style="left:376.7px;top:16.2px;width:1.7px;height:1.7px;border-radius:1px;background:#a3a3ab"></div>
<div class="abs" style="left:376.7px;top:21.7px;width:1.7px;height:1.7px;border-radius:1px;background:#a3a3ab"></div>
<div class="abs" style="left:376.7px;top:27.1px;width:1.7px;height:1.7px;border-radius:1px;background:#a3a3ab"></div>

<div class="sep" style="left:410px"></div>
<svg class="abs" style="left:429px;top:15px" width="18" height="18" viewBox="0 0 18 18" fill="none" stroke="#a9a9b3" stroke-width="1.2"><path d="M0.2 0.8 H17.2 M1.8 0.8 V11.6 A1 1 0 0 0 2.8 12.6 H14.6 A1 1 0 0 0 15.6 11.6 V0.8"/><path d="M8.7 12.6 V17.4 M4 17.4 H13.4"/><path d="M5 6.8 L7 8.6 L10.8 4.8 L12.6 6.8" stroke-width="1"/></svg>
<div class="sep" style="left:465px"></div>
<svg class="abs" style="left:483px;top:15px" width="18" height="18" viewBox="0 0 18 18" fill="none" stroke="#a9a9b3" stroke-width="1.2"><path d="M16.9 8.6 A8.1 8.1 0 1 0 15.6 13.6"/><path d="M13 7.2 L16.9 8.9 L17.1 4.6" stroke-width="1.1"/></svg>
<div class="sep" style="left:519px"></div>
<svg class="abs" style="left:539px;top:16px" width="16" height="16" viewBox="0 0 16 16" fill="none" stroke="#a9a9b3" stroke-width="1.1"><rect x="0.7" y="1.7" width="14.2" height="13.4" rx="2"/><path d="M3.6 12.4 L12 4.2 M8.6 4 H12.2 V7.6 M3.4 9 V12.6 H7" stroke-width="0.9"/></svg>
<div class="sep" style="left:573px"></div>
<svg class="abs" style="left:592px;top:15px" width="18" height="18" viewBox="0 0 18 18" fill="none" stroke="#a9a9b3" stroke-width="1.2"><path d="M9 0.8 H2.8 A2 2 0 0 0 0.8 2.8 V15.2 A2 2 0 0 0 2.8 17.2 H14.8 A2 2 0 0 0 16.8 15.2 V10.6"/><path d="M4.6 14.2 C4.6 9 9 5.6 16.6 5.6"/><path d="M12.8 1.4 L17 5.6 L12.8 9.8"/></svg>

<div class="abs" style="left:1258px;top:8.3px;width:94px;height:30px;background:#5b6fd6;border-radius:4px 0 0 4px"></div>
<svg class="abs" style="left:1277px;top:17px" width="17" height="13" viewBox="0 0 17 13" fill="none" stroke="#fff" stroke-width="1.2"><rect x="0.7" y="0.7" width="15.4" height="8.6" rx="1"/><path d="M8.4 9.3 V12 M4.6 12.2 H12.2"/></svg>
<span class="abs" style="left:1300px;top:13px;height:22px;line-height:22px;font-size:13px;color:#fff;white-space:nowrap"><span style="font-size:12px;letter-spacing:-.4px">PC </span>端</span>
<div class="abs" style="left:1352px;top:8.3px;width:94px;height:30px;background:#fff;border:1px solid #8f9be6;border-left:none"></div>
<svg class="abs" style="left:1372px;top:16px" width="10" height="15" viewBox="0 0 10 15" fill="none" stroke="#5b6fd6" stroke-width="1.1"><rect x="0.7" y="0.7" width="8.6" height="13.2" rx="1.4"/><path d="M3.6 2.8 H6.4 M4.4 11.8 H5.6" stroke-width="0.9"/></svg>
<span class="abs" style="left:1387px;top:13px;height:22px;line-height:22px;font-size:13px;color:#5b6fd6;white-space:nowrap">手机端</span>
<!--TOOL-E--></div>
</body>
</html>
